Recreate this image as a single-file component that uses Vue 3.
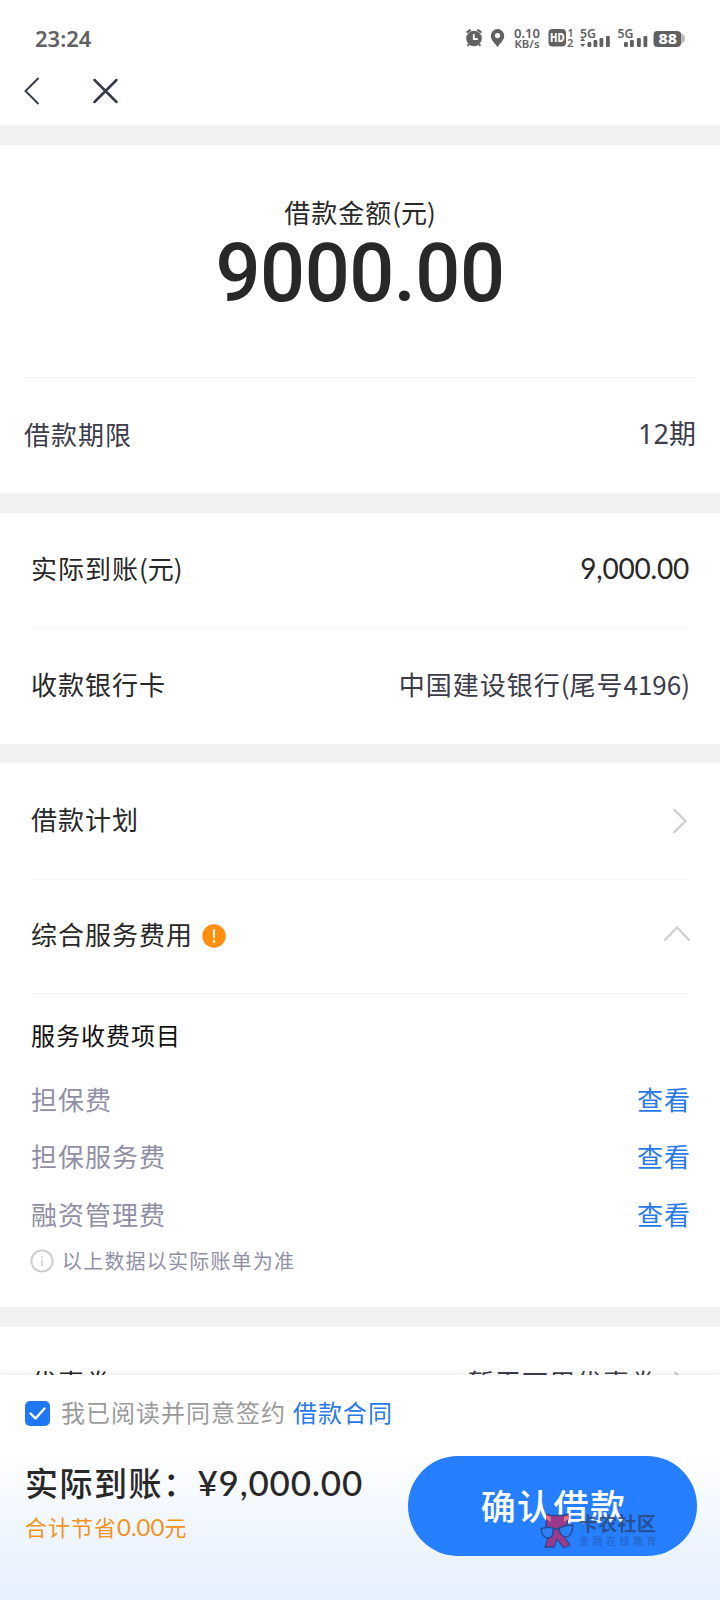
<script setup>
const fees = ['担保费', '担保服务费', '融资管理费']
const barsA = [[147.5, 5], [153.5, 7], [159.5, 9], [166, 11]]
const barsB = [[184, 5], [190, 7], [197, 9], [203.5, 11]]
</script>

<template>
  <div class="screen">
    <header class="status">
      <span class="clock">23:24</span>
      <svg class="indicators" width="280" height="60" viewBox="0 0 280 60" fill="#616161">
        <circle cx="34" cy="28.5" r="7.8" />
        <path d="M26.600 22.600l4-3M41.400 22.600l-4-3M29 34l-1.400 1.800M39 34l1.400 1.800" stroke="#616161" stroke-width="2" />
        <path d="M33.800 24v5h4" fill="none" stroke="#fff" stroke-width="1.800" />
        <path fill-rule="evenodd" d="M57.500 19a6.700 6.700 0 0 0-6.700 6.700c0 4.600 4.200 7.400 6.700 11.300 2.500-3.900 6.700-6.700 6.700-11.300a6.700 6.700 0 0 0-6.700-6.700zm0 4a2.600 2.600 0 1 1 0 5.200 2.600 2.600 0 0 1 0-5.200z" />
        <text x="74" y="28" font-size="12.500" textLength="26" lengthAdjust="spacingAndGlyphs" class="b">0.10</text>
        <text x="74.500" y="37.800" font-size="11" textLength="25" lengthAdjust="spacingAndGlyphs" class="b">KB/s</text>
        <rect x="108.500" y="19" width="17.500" height="17.500" rx="4" />
        <text x="110" y="32" font-size="11.500" textLength="14.500" lengthAdjust="spacingAndGlyphs" class="bb" fill="#fff">HD</text>
        <text x="127.500" y="27" font-size="10.500" class="b">1</text>
        <text x="127" y="36.500" font-size="11" class="b">2</text>
        <text x="140" y="27.500" font-size="13" textLength="16" lengthAdjust="spacingAndGlyphs" class="b">5G</text>
        <path d="M142.700 28l2.600 3h-5.200zM142.700 37l2.600-3h-5.200z" />
        <rect v-for="b in barsA" :key="b[0]" :x="b[0]" :y="37 - b[1]" width="3.800" :height="b[1]" rx="1" />
        <text x="177.500" y="27.500" font-size="13" textLength="16" lengthAdjust="spacingAndGlyphs" class="b">5G</text>
        <rect v-for="b in barsB" :key="b[0]" :x="b[0]" :y="37 - b[1]" width="3.800" :height="b[1]" rx="1" />
        <path d="M240 21.500l2 2.500q3 1 3 4.500t-3 4.500l-2 2.500z" fill="#bbb" />
        <rect x="213.500" y="21" width="27.500" height="16" rx="4" />
        <text x="218.500" y="34" font-size="14" textLength="18.500" lengthAdjust="spacingAndGlyphs" class="bb" fill="#fff">88</text>
      </svg>
    </header>
    <nav class="nav">
      <svg width="130" height="40" viewBox="0 0 130 40" fill="none" stroke="#353a46">
        <path d="M38.500 8L25.500 21l13 13" stroke-width="1.900" />
        <path d="M94.500 10l22 22M116.500 10l-22 22" stroke-width="2.500" stroke-linecap="round" />
      </svg>
    </nav>

    <section class="card amount">
      <div class="amount-title">借款金额<span class="lat">(元)</span></div>
      <div class="amount-value">9000.00</div>
      <div class="row term"><span class="t">借款期限</span><span class="t term-value">12期</span></div>
    </section>

    <section class="card inset account">
      <div class="row"><span class="t">实际到账<span class="lat">(元)</span></span><span class="t num">9,000.00</span></div>
      <div class="row"><span class="t">收款银行卡</span><span class="t bank">中国建设银行<span class="lat">(</span>尾号<span class="lat">4196)</span></span></div>
    </section>

    <section class="card inset plan">
      <div class="row">
        <span class="t">借款计划</span>
        <svg class="right" width="16" height="28" viewBox="0 0 16 28"><path d="M1.500 2l12 12-12 12" /></svg>
      </div>
      <div class="row lined">
        <span class="with-icon"><span class="t">综合服务费用</span>
          <svg width="24" height="24" viewBox="0 0 24 24"><circle cx="12" cy="12" r="11.700" fill="#ff8f0f" /><path d="M10.800 5.500h2.400l-.5 9h-1.400z" fill="#fff" /><circle cx="12" cy="17.500" r="1.300" fill="#fff" /></svg>
        </span>
        <svg class="up" width="28" height="18" viewBox="0 0 28 18"><path d="M1.500 15.500l12.500-13 12.500 13" /></svg>
      </div>
      <h3>服务收费项目</h3>
      <div v-for="fee in fees" :key="fee" class="fee"><span>{{ fee }}</span><a>查看</a></div>
      <div class="hint">
        <svg width="24" height="24" viewBox="0 0 24 24" fill="none" stroke="#ccc"><circle cx="12" cy="12" r="10.600" stroke-width="1.800" /><path d="M12 10.500v6.500M12 7v1.800" stroke-width="1.500" /></svg>
        <span>以上数据以实际账单为准</span>
      </div>
    </section>

    <section class="card inset">
      <div class="row"><span class="t">优惠券</span>
        <span class="coupon"><span class="t">暂无可用优惠券</span><svg width="16" height="28" viewBox="0 0 16 28"><path d="M1.500 2l12 12-12 12" /></svg></span>
      </div>
    </section>

    <footer class="footer">
      <div class="agree">
        <svg width="25" height="25" viewBox="0 0 25 25"><rect width="25" height="25" rx="5" fill="#2077f5" /><path d="M5.500 12.500l5 5 9-10" fill="none" stroke="#fff" stroke-width="2.400" stroke-linecap="round" stroke-linejoin="round" /></svg>
        <span class="t">我已阅读并同意签约</span><a class="t">借款合同</a>
      </div>
      <div class="pay">
        <div>
          <div class="total"><span>实际到账：</span><b>¥9,000.00</b></div>
          <div class="saved">合计节省<span class="saved-num">0.00</span>元</div>
        </div>
        <button>确认借款</button>
      </div>
      <div class="mark">
        <svg width="36" height="36" viewBox="0 0 36 36">
          <path d="M8 1l5 1.500h10L29 1l-1 12-6 6 9 13-6 3-7-9-3 8H6l5-15-4-6z" fill="#9b3a8b" stroke="#284a91" stroke-width="1.300" />
          <path d="M7 2l5 2v5l-5-3zM30 2l-5 2v5l5-3z" fill="#e36a88" />
          <path d="M2 16q6-3 12-1v4q0 6-5 6-6 0-7-9zM20 15q6-3 14-3-1 12-7 12-6 0-7-9z" fill="#2b80f6" stroke="#284a91" stroke-width="1.500" />
          <path d="M14 16h6" stroke="#284a91" stroke-width="1.500" />
        </svg>
        <div><div class="mark-name">卡农社区</div><div class="mark-sub">金融在线教育</div></div>
      </div>
    </footer>
  </div>
</template>

<style>
body { margin: 0; background: #fff; }
</style>

<style scoped>
.screen {
  width: 720px; height: 1600px; overflow: hidden; position: relative;
  box-sizing: border-box; background: #f1f2f4; color: #282828;
  font: 26px/1 "Noto Sans CJK SC", sans-serif;
  letter-spacing: 1px;
}
.screen span, .screen a { white-space: nowrap; }
.t { padding-bottom: 4px; }
.lat { letter-spacing: 0; }
.status { height: 70px; background: #fff; display: flex; justify-content: space-between; }
.clock { font: 600 22px/76px "Noto Sans", sans-serif; letter-spacing: 0; color: #616161; margin-left: 35px; }
.indicators { margin-top: 10px; font-family: "Noto Sans", sans-serif; letter-spacing: 0; }
.b { font-weight: 600; }
.bb { font-weight: 800; }
.nav { height: 54.5px; background: #fff; margin-bottom: 20.5px; }
.nav svg { display: block; }
.card { background: #fff; margin-bottom: 19.5px; box-sizing: border-box; }
.amount { height: 348px; padding: 0 24px; }
.amount-title { padding-top: 53px; height: 30px; line-height: 28px; text-align: center; }
.amount-value { height: 149px; font: 500 82px/90px Roboto, sans-serif; letter-spacing: -.5px; text-align: center; transform: scaleX(.967); }
.row { height: 115.5px; box-sizing: border-box; display: flex; align-items: center; justify-content: space-between; }
.row + .row, .term { border-top: 1px solid #f5f5f6; }
.term { height: 116px; color: #3c3c4a; }
.term-value { font-family: "Noto Sans", "Noto Sans CJK SC", sans-serif; font-size: 27px; letter-spacing: 0; }
.inset { padding: 0 31px; }
.account { height: 231px; }
.plan { height: 544px; }
.num { font: 28px/1 Lato, sans-serif; letter-spacing: -.2px; }
.bank { color: #3c3c4a; margin-right: -1px; }
.row svg path { fill: none; stroke: #d0d0d0; stroke-width: 2.300; }
.right { margin-right: 1px; }
.up { margin-bottom: 5px; margin-right: -2px; }
.with-icon { display: flex; align-items: center; gap: 9px; }
.row .with-icon svg path { fill: #fff; stroke: none; }
.lined { border-bottom: 1px solid #f5f5f6; }
h3 { margin: 0; font-size: 24px; font-weight: 400; line-height: 40px; padding-top: 21px; color: #111; }
.fee { height: 57.5px; display: flex; align-items: center; justify-content: space-between; color: #908fa6; }
.fee a { margin-right: -2px; }
h3 + .fee { margin-top: 15px; }
.screen a { color: #2979e8; }
.hint { height: 24px; display: flex; align-items: center; gap: 8px; font-size: 20px; letter-spacing: 1.2px; color: #908fa6; margin-top: 6px; }
.hint svg { margin-left: -1px; }
.coupon { display: flex; align-items: center; gap: 16px; color: #3c3c4a; }
.footer {
  position: absolute; left: 0; right: 0; bottom: 0; height: 225px; box-sizing: border-box;
  padding: 26px 24px 0 25px;
  background: linear-gradient(#fff 0, #fff 32%, #f3f8ff 62%, #eaf3fe 84%, #e7f1fe 100%);
  box-shadow: 0 -1px 6px rgba(0, 0, 0, .09);
}
.agree { display: flex; align-items: center; height: 25px; font-size: 24px; color: #9b9b9b; }
.agree span { margin-left: 11px; }
.agree a { margin-left: 7px; }
.pay { display: flex; justify-content: space-between; margin-top: 30px; }
.total { display: flex; align-items: center; height: 52px; font-size: 33px; font-weight: 500; letter-spacing: 1.5px; }
.total b { font: 500 35px/1 Lato, sans-serif; letter-spacing: .8px; }
.saved { font-size: 22px; color: #f39322; line-height: 36px; }
.saved-num { font: 24px/1 Lato, sans-serif; letter-spacing: 0; }
button { width: 289px; height: 100px; border: 0; border-radius: 50px; background: #267fff; color: #fff; font: 500 35px/97px "Noto Sans CJK SC", sans-serif; letter-spacing: 1.4px; padding: 0 0 3px 2px; margin-right: -1px; }
.mark { position: absolute; left: 539px; top: 138px; display: flex; gap: 4px; color: #284985; }
.mark-name { font-size: 19px; font-weight: 700; line-height: 20px; letter-spacing: .3px; white-space: nowrap; opacity: .85; }
.mark-sub { font-size: 10px; font-weight: 700; line-height: 14px; letter-spacing: 3.5px; white-space: nowrap; opacity: .4; margin-top: 1px; }
</style>
